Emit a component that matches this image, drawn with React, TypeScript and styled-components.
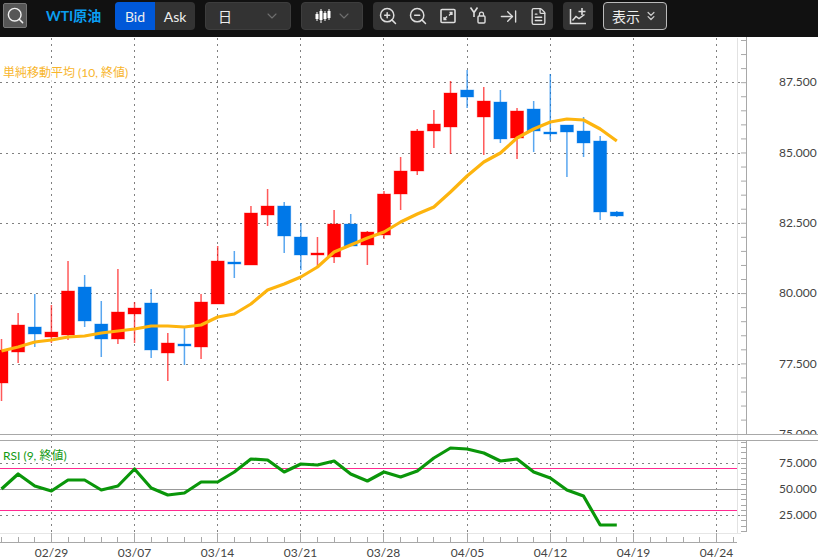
import React from 'react';
import styled, { createGlobalStyle } from 'styled-components';
import { ChevronDown, ChevronsDown, Search, ZoomIn, ZoomOut, ArrowRightToLine, FileText } from 'lucide-react';

const UP = '#ff0000';
const DOWN = '#0078e8';
const GRID = '#808080';
const AXIS = '#a8a8a8';

// [wick top, wick bottom, body top, body bottom, up?]
const candles: [number, number, number, number, boolean][] = [
  [339, 401, 350, 383, true],
  [313, 363, 325, 352, true],
  [294, 347, 327, 334, false],
  [305, 343, 332, 337, true],
  [261, 340, 291, 335, true],
  [275, 327, 287, 321, false],
  [301, 357, 324, 339, false],
  [269, 344, 312, 339, true],
  [302, 343, 308, 314, true],
  [289, 358, 303, 350, false],
  [333, 381, 343, 353, true],
  [328, 365, 344, 346, false],
  [294, 359, 302, 347, true],
  [246, 304, 261, 304, true],
  [251, 278, 262, 264, false],
  [206, 265, 213, 265, true],
  [189, 226, 206, 215, true],
  [202, 253, 206, 236, false],
  [223, 270, 237, 255, false],
  [237, 267, 253, 255, true],
  [210, 263, 224, 257, true],
  [214, 246, 224, 246, false],
  [231, 265, 232, 245, true],
  [191, 239, 194, 235, true],
  [157, 210, 171, 194, true],
  [129, 175, 131, 171, true],
  [110, 148, 124, 131, true],
  [81, 154, 93, 127, true],
  [70, 108, 90, 97, false],
  [87, 155, 101, 117, true],
  [90, 143, 102, 139, false],
  [108, 159, 111, 138, true],
  [101, 152, 109, 131, false],
  [74, 140, 132, 134, false],
  [125, 177, 125, 132, false],
  [117, 157, 131, 143, false],
  [136, 220, 141, 212, false],
  [211, 217, 212, 216, false],
];

const maLine = [
  351, 347, 342, 340, 337, 336, 333, 331, 329, 326, 326, 327, 325, 317, 314, 304, 290, 284, 277, 267,
  252, 245, 238, 232, 222, 214, 207, 192, 176, 162, 153, 138, 129, 122, 119, 120, 129, 141,
];

const rsiLine = [
  489, 474, 486, 491, 480, 480, 490, 486, 469, 488, 495, 493, 482, 482, 472, 459, 460, 472, 464, 465,
  461, 474, 481, 472, 477, 471, 458, 448, 449, 453, 461, 459, 472, 478, 490, 496, 525, 525,
];

const slotX = (i: number) => 1.5 + 16.63 * i;
const toPoints = (ys: number[]) => ys.map((y, i) => `${slotX(i).toFixed(1)},${y}`).join(' ');
const crisp = (v: number) => Math.floor(v) + 0.5;

const dates = ['02/29', '03/07', '03/14', '03/21', '03/28', '04/05', '04/12', '04/19', '04/24'];
const weekX = dates.map((_, i) => crisp(slotX(3 + i * 5)));
const priceRows = [
  { y: 82.5, label: '87.500' },
  { y: 153.5, label: '85.000' },
  { y: 223.5, label: '82.500' },
  { y: 293.5, label: '80.000' },
  { y: 364.5, label: '77.500' },
];
const rsiRows = [
  { y: 463.5, label: '75.000' },
  { y: 489.5, label: '50.000' },
  { y: 515.5, label: '25.000' },
];

function CandleIcon() {
  return (
    <svg width="18" height="18" viewBox="0 0 18 18" fill="none" stroke="#fff">
      <path d="M3 5v9M7 2v14M11 4v10M15 2v11" strokeWidth="1" />
      <path d="M3 7v5M7 4v9M11 6v6M15 4v7" strokeWidth="3" />
    </svg>
  );
}

function ExpandIcon() {
  return (
    <svg width="18" height="18" viewBox="0 0 18 18" fill="none" stroke="#ddd" strokeWidth="1.6">
      <rect x="2" y="2.5" width="14" height="13" rx="1" />
      <path d="M10.5 5.5h2.5v2.5M13 5.5l-3 3M7.5 12.5H5V10M5 12.5l3-3" strokeWidth="1.3" />
    </svg>
  );
}

function AxisLockIcon() {
  return (
    <svg width="18" height="20" viewBox="0 0 18 20" fill="none" stroke="#ddd" strokeWidth="1.6">
      <path d="M1.5 1.5l3.5 5 3.5-5M5 6.5V11" />
      <rect x="9" y="10" width="7" height="7" rx="1" strokeWidth="1.4" />
      <path d="M10.5 10V8.2a2 2 0 0 1 4 0V10" strokeWidth="1.3" />
    </svg>
  );
}

function TrendPlusIcon() {
  return (
    <svg width="18" height="18" viewBox="0 0 18 18" fill="none" stroke="#ddd" strokeWidth="1.5">
      <path d="M1.5 2v14.5H17" />
      <path d="M3.5 13.5l3.5-4 3 2 5.5-4" />
      <path d="M13 1v7M9.5 4.5h7" strokeWidth="1.6" />
    </svg>
  );
}

function App() {
  return (
    <Page>
      <GlobalStyle />
      <Toolbar>
        <SearchButton>
          <Search size={19} strokeWidth={1.8} />
        </SearchButton>
        <Title>WTI原油</Title>
        <Segment>
          <SegmentButton $active>Bid</SegmentButton>
          <SegmentButton>Ask</SegmentButton>
        </Segment>
        <Dropdown $width={86}>
          <DropdownLabel>日</DropdownLabel>
          <ChevronDown size={16} color="#6f6f6f" strokeWidth={1.6} />
        </Dropdown>
        <Dropdown $width={62}>
          <CandleIcon />
          <ChevronDown size={16} color="#6f6f6f" strokeWidth={1.6} />
        </Dropdown>
        <ToolGroup>
          <IconButton>
            <ZoomIn size={20} strokeWidth={1.8} />
          </IconButton>
          <IconButton>
            <ZoomOut size={20} strokeWidth={1.8} />
          </IconButton>
          <IconButton>
            <ExpandIcon />
          </IconButton>
          <IconButton>
            <AxisLockIcon />
          </IconButton>
          <IconButton>
            <ArrowRightToLine size={19} strokeWidth={1.7} />
          </IconButton>
          <IconButton>
            <FileText size={19} strokeWidth={1.7} />
          </IconButton>
        </ToolGroup>
        <ToolGroup>
          <IconButton>
            <TrendPlusIcon />
          </IconButton>
        </ToolGroup>
        <ShowButton>
          表示
          <ChevronsDown size={14} strokeWidth={2.2} color="#ccc" />
        </ShowButton>
      </Toolbar>

      <ChartSvg viewBox="0 37 818 523" width="818" height="523">
        <defs>
          <clipPath id="price-clip">
            <rect x="0" y="37" width="818" height="397" />
          </clipPath>
        </defs>

        {/* grid */}
        {priceRows.map((row) => (
          <GridLine key={row.y} x1="0" x2="741" y1={row.y} y2={row.y} />
        ))}
        {rsiRows
          .filter((row) => row.y !== 489.5)
          .map((row) => (
            <GridLine key={row.y} x1="0" x2="741" y1={row.y} y2={row.y} />
          ))}
        {weekX.map((x) => (
          <GridLine key={x} x1={x} x2={x} y1="38" y2="533" />
        ))}
        <line x1="737.5" x2="737.5" y1="38" y2="533" stroke="#e2e2e2" />
        <line x1="0" x2="741" y1="533.5" y2="533.5" stroke="#e6e6e6" />

        {/* price panel */}
        <g clipPath="url(#price-clip)">
          {candles.map(([high, low, top, bottom, up], i) => {
            const x = slotX(i);
            const color = up ? UP : DOWN;
            return (
              <g key={i}>
                <rect x={x - 0.75} y={high} width="1.5" height={low - high} fill={color} opacity="0.65" />
                <rect x={x - 6.5} y={top} width="13" height={bottom - top} fill={color} stroke={color} strokeOpacity="0.35" />
              </g>
            );
          })}
          <polyline points={toPoints(maLine)} fill="none" stroke="#fdb40e" strokeWidth="3.2" strokeLinejoin="round" />
          <PriceLabel x="779" y="433">75.000</PriceLabel>
        </g>
        <rect x="0" y="64" width="128" height="18" fill="#fff" opacity="0.7" />
        <Legend x="3" y="77" fill="#f8b52c">単純移動平均 (10, 終値)</Legend>

        {/* rsi panel */}
        <line x1="0" x2="741" y1="489.5" y2="489.5" stroke="#999" />
        <PinkLine x1="0" x2="737" y1="468.5" y2="468.5" />
        <PinkLine x1="0" x2="737" y1="510.5" y2="510.5" />
        <polyline points={toPoints(rsiLine)} fill="none" stroke="#0a960a" strokeWidth="3.2" strokeLinejoin="round" />
        <Legend x="3" y="460" fill="#129a12">RSI (9, 終値)</Legend>

        {/* panel split */}
        <line x1="0" x2="818" y1="434.5" y2="434.5" stroke={AXIS} />
        <line x1="0" x2="818" y1="440.5" y2="440.5" stroke={AXIS} />

        {/* right axis */}
        <line x1="746.5" x2="746.5" y1="37" y2="434" stroke={AXIS} />
        <line x1="746.5" x2="746.5" y1="441" y2="532" stroke={AXIS} />
        {Array.from({ length: 28 }, (_, i) => 40.5 + i * 14.06).map((y) => (
          <line key={y} x1="741" x2="746" y1={y} y2={y} stroke={AXIS} />
        ))}
        {Array.from({ length: 18 }, (_, i) => 442.5 + i * 5.22).map((y) => (
          <line key={y} x1="741" x2="746" y1={crisp(y)} y2={crisp(y)} stroke={AXIS} />
        ))}
        {priceRows.concat(rsiRows).map((row) => (
          <PriceLabel key={row.y} x="779" y={row.y - 1}>
            {row.label}
          </PriceLabel>
        ))}

        {/* time axis */}
        <line x1="0" x2="737" y1="542.5" y2="542.5" stroke={AXIS} />
        {Array.from({ length: 45 }, (_, i) => crisp(slotX(i))).map((x) => (
          <line key={x} x1={x} x2={x} y1="537" y2="542" stroke={AXIS} />
        ))}
        {weekX.map((x, i) => (
          <g key={x}>
            <line x1={x} x2={x} y1="533" y2="542" stroke={AXIS} />
            <DateLabel x={x} y="552">
              {dates[i]}
            </DateLabel>
          </g>
        ))}
      </ChartSvg>
    </Page>
  );
}

export default App;

const GlobalStyle = createGlobalStyle`
  html, body {
    margin: 0;
    padding: 0;
    background: #fff;
  }
`;

const Page = styled.div`
  width: 818px;
  height: 560px;
  overflow: hidden;
  font-family: Lato, 'Noto Sans CJK JP', sans-serif;
`;

const Toolbar = styled.header`
  display: flex;
  align-items: flex-start;
  gap: 10px;
  height: 37px;
  box-sizing: border-box;
  padding: 2px 0 0 3px;
  background-color: #111;
`;

const SearchButton = styled.button`
  display: flex;
  align-items: center;
  justify-content: center;
  width: 24px;
  height: 25px;
  margin-top: 1px;
  padding: 0;
  background-color: #555;
  border: 1px solid #777;
  border-radius: 2px;
  color: #eee;
`;

const Title = styled.div`
  width: 59px;
  margin-left: 9px;
  font-size: 14px;
  line-height: 28px;
  font-weight: 700;
  color: #0a9df0;
`;

const Segment = styled.div`
  display: flex;
  height: 28px;
  border-radius: 4px;
  overflow: hidden;
  background-color: #333;
`;

const SegmentButton = styled.button<{ $active?: boolean }>`
  width: 40px;
  padding: 0;
  border: 0;
  font-family: inherit;
  font-size: 14px;
  color: #eee;
  background-color: ${({ $active }) => ($active ? '#0058d8' : 'transparent')};
`;

const Dropdown = styled.div<{ $width: number }>`
  display: flex;
  align-items: center;
  justify-content: space-between;
  box-sizing: border-box;
  width: ${({ $width }) => $width}px;
  height: 28px;
  padding: 0 10px 0 12px;
  background-color: #333;
  border: 1px solid #3d3d3d;
  border-radius: 4px;
`;

const DropdownLabel = styled.span`
  font-size: 14px;
  color: #eee;
`;

const ToolGroup = styled.div`
  display: flex;
  height: 28px;
  background-color: #333;
  border-radius: 4px;
`;

const IconButton = styled.button`
  display: flex;
  align-items: center;
  justify-content: center;
  width: 30px;
  height: 28px;
  padding: 0;
  border: 0;
  background: transparent;
  color: #ddd;
`;

const ShowButton = styled.button`
  display: flex;
  align-items: center;
  justify-content: center;
  gap: 4px;
  box-sizing: border-box;
  width: 64px;
  height: 28px;
  padding: 0;
  background-color: #333;
  border: 1px solid #bbb;
  border-radius: 4px;
  font-family: inherit;
  font-size: 14px;
  color: #eee;
`;

const ChartSvg = styled.svg`
  display: block;
`;

const GridLine = styled.line`
  stroke: ${GRID};
  stroke-dasharray: 2 4;
`;

const PinkLine = styled.line`
  stroke: #ff2a92;
`;

const Legend = styled.text`
  font-size: 12px;
`;

const PriceLabel = styled.text`
  font-size: 12px;
  fill: #444;
  dominant-baseline: central;
`;

const DateLabel = styled.text`
  font-size: 12px;
  fill: #444;
  text-anchor: middle;
  dominant-baseline: central;
`;
